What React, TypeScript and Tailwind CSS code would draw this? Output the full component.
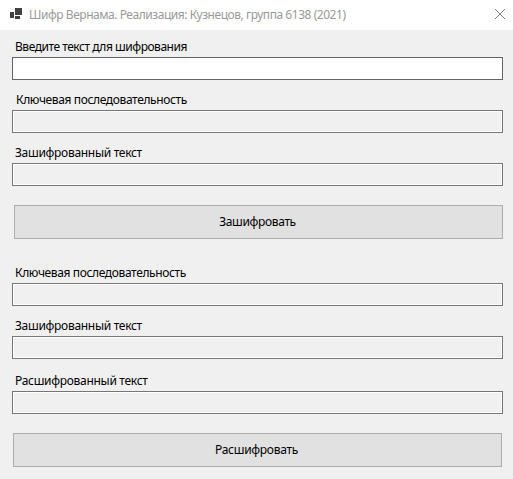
type FieldProps = {
  id: string;
  label: string;
  labelClass: string;
  className: string;
  readOnly?: boolean;
};

function Field({ id, label, labelClass, className, readOnly = false }: FieldProps) {
  return (
    <div className={`ml-3 flex w-[491px] flex-col ${className}`}>
      <label htmlFor={id} className={`h-[18px] self-start whitespace-nowrap leading-[16px] ${labelClass}`}>
        {label}
      </label>
      <input
        id={id}
        readOnly={readOnly}
        className={`h-[23px] w-full px-1 outline-none border ${
          readOnly
            ? "border-[#767676] bg-[#f0f0f0] shadow-[inset_0_0_0_1px_#ffffff]"
            : "border-[#646464] bg-white"
        }`}
      />
    </div>
  );
}

export default function App() {
  return (
    <div className="flex h-[479px] w-[513px] flex-col overflow-hidden bg-[#f0f0f0] font-['Noto_Sans','Open_Sans',sans-serif] text-[12px] text-black">
      <header className="flex h-[30px] shrink-0 items-center bg-white text-[#999999]">
        <svg width="12" height="11" viewBox="0 0 12 11" className="mt-2 ml-[10px] shrink-0 self-start" shapeRendering="crispEdges">
          <path d="M0 4h4v6H0zM5 0h7v7H5zM5 8h5v3H5z" fill="#404040" />
        </svg>
        <h1 className="ml-[7px] whitespace-nowrap leading-[16px] tracking-[-0.46px]">
          Шифр Вернама. Реализация: Кузнецов, группа 6138 (2021)
        </h1>
        <button aria-label="Закрыть" className="mr-2 ml-auto -translate-y-px">
          <svg width="10" height="10" viewBox="0 0 10 10" fill="none" stroke="#808080">
            <path d="M0 0l10 10M10 0L0 10" />
          </svg>
        </button>
      </header>
      <main className="flex flex-col">
        <Field id="plain" label="Введите текст для шифрования" labelClass="ml-[3px] tracking-[-0.47px]" className="mt-[9px]" />
        <Field id="key" label="Ключевая последовательность" labelClass="ml-[4px] tracking-[-0.37px]" className="mt-[12px]" readOnly />
        <Field id="cipher" label="Зашифрованный текст" labelClass="ml-[3px] tracking-[-0.3px]" className="mt-[12px]" readOnly />
        <button className="mt-[19px] ml-[14px] h-[34px] w-[489px] border border-[#adadad] bg-[#e1e1e1] pr-[2px] pb-px leading-[16px] tracking-[-0.35px]">
          Зашифровать
        </button>
        <Field id="key2" label="Ключевая последовательность" labelClass="ml-[3px] tracking-[-0.37px]" className="mt-[26px]" readOnly />
        <Field id="cipher2" label="Зашифрованный текст" labelClass="ml-[3px] tracking-[-0.3px]" className="mt-[12px]" readOnly />
        <Field id="result" label="Расшифрованный текст" labelClass="ml-[3px] tracking-[-0.3px]" className="mt-[14px]" readOnly />
        <button className="mt-[19px] ml-[13px] h-[34px] w-[489px] border border-[#adadad] bg-[#e1e1e1] pr-[2px] pb-px leading-[16px] tracking-[-0.3px]">
          Расшифровать
        </button>
      </main>
    </div>
  );
}
